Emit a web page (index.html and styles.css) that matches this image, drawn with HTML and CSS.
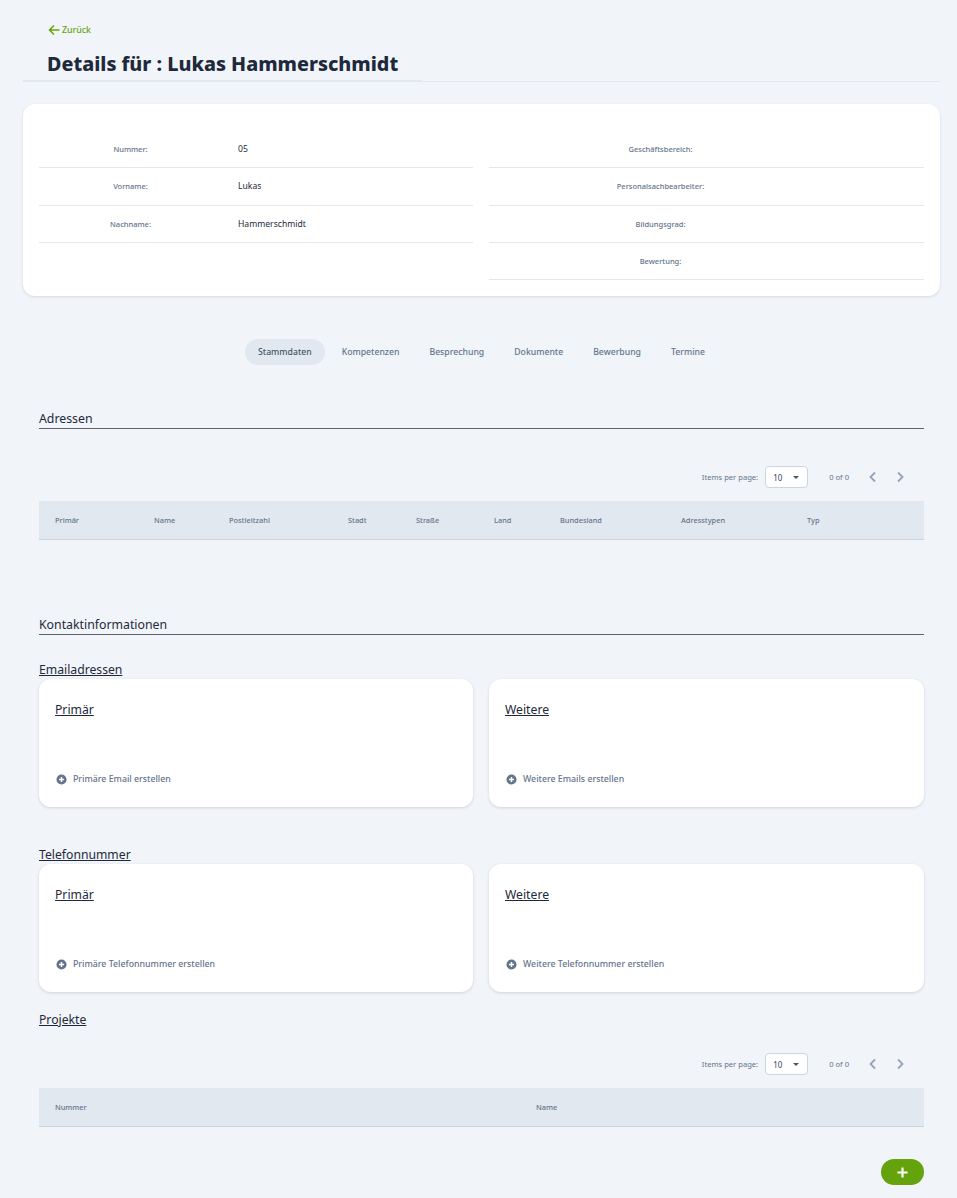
FILE: index.html
```html
<!DOCTYPE html>
<html lang="de">
<head>
<meta charset="utf-8">
<title>Details für : Lukas Hammerschmidt</title>
<link rel="stylesheet" href="styles.css">
</head>
<body>
<main class="page">
  <a class="back" href="#">
    <svg class="back-icon" viewBox="0 0 12 12" aria-hidden="true"><path d="M11.5 6H1.5M6 1.5L1.5 6L6 10.5"/></svg>
    <span>Zurück</span>
  </a>
  <header class="title-bar"><h1>Details für : Lukas Hammerschmidt</h1></header>

  <section class="summary">
    <div class="summary-col">
      <div class="row"><span class="lbl lbl-l">Nummer:</span><span class="val">05</span></div>
      <div class="row"><span class="lbl lbl-l">Vorname:</span><span class="val">Lukas</span></div>
      <div class="row"><span class="lbl lbl-l">Nachname:</span><span class="val">Hammerschmidt</span></div>
    </div>
    <div class="summary-col">
      <div class="row"><span class="lbl lbl-r">Geschäftsbereich:</span></div>
      <div class="row"><span class="lbl lbl-r">Personalsachbearbeiter:</span></div>
      <div class="row"><span class="lbl lbl-r">Bildungsgrad:</span></div>
      <div class="row"><span class="lbl lbl-r">Bewertung:</span></div>
    </div>
  </section>

  <nav class="tabs">
    <a class="tab active" href="#">Stammdaten</a>
    <a class="tab" href="#">Kompetenzen</a>
    <a class="tab" href="#">Besprechung</a>
    <a class="tab" href="#">Dokumente</a>
    <a class="tab" href="#">Bewerbung</a>
    <a class="tab" href="#">Termine</a>
  </nav>

  <div class="content">
    <h2 class="section-title">Adressen</h2>
    <div class="pager pager-first">
      <span class="pager-label">Items per page:</span>
      <span class="select"><span>10</span><i class="caret"></i></span>
      <span class="pager-range">0 of 0</span>
      <svg class="chev" viewBox="0 0 10 12" aria-hidden="true"><path d="M7 1.5L2.5 6L7 10.5"/></svg>
      <svg class="chev" viewBox="0 0 10 12" aria-hidden="true"><path d="M3 1.5L7.5 6L3 10.5"/></svg>
    </div>
    <div class="thead cols-address">
      <span>Primär</span><span>Name</span><span>Postleitzahl</span><span>Stadt</span><span>Straße</span><span>Land</span><span>Bundesland</span><span>Adresstypen</span><span>Typ</span>
    </div>

    <h2 class="section-title contact-title">Kontaktinformationen</h2>

    <h3 class="sub-title email-title">Emailadressen</h3>
    <div class="card-pair">
      <div class="card">
        <h4 class="card-title">Primär</h4>
        <a class="add" href="#"><svg class="add-icon" viewBox="0 0 12 12" aria-hidden="true"><circle cx="6" cy="6" r="5.5"/><path d="M6 3.3V8.7M3.3 6H8.7"/></svg><span>Primäre Email erstellen</span></a>
      </div>
      <div class="card">
        <h4 class="card-title">Weitere</h4>
        <a class="add" href="#"><svg class="add-icon" viewBox="0 0 12 12" aria-hidden="true"><circle cx="6" cy="6" r="5.5"/><path d="M6 3.3V8.7M3.3 6H8.7"/></svg><span>Weitere Emails erstellen</span></a>
      </div>
    </div>

    <h3 class="sub-title phone-title">Telefonnummer</h3>
    <div class="card-pair">
      <div class="card">
        <h4 class="card-title">Primär</h4>
        <a class="add" href="#"><svg class="add-icon" viewBox="0 0 12 12" aria-hidden="true"><circle cx="6" cy="6" r="5.5"/><path d="M6 3.3V8.7M3.3 6H8.7"/></svg><span>Primäre Telefonnummer erstellen</span></a>
      </div>
      <div class="card">
        <h4 class="card-title">Weitere</h4>
        <a class="add" href="#"><svg class="add-icon" viewBox="0 0 12 12" aria-hidden="true"><circle cx="6" cy="6" r="5.5"/><path d="M6 3.3V8.7M3.3 6H8.7"/></svg><span>Weitere Telefonnummer erstellen</span></a>
      </div>
    </div>

    <h3 class="sub-title project-title">Projekte</h3>
    <div class="pager pager-second">
      <span class="pager-label">Items per page:</span>
      <span class="select"><span>10</span><i class="caret"></i></span>
      <span class="pager-range">0 of 0</span>
      <svg class="chev" viewBox="0 0 10 12" aria-hidden="true"><path d="M7 1.5L2.5 6L7 10.5"/></svg>
      <svg class="chev" viewBox="0 0 10 12" aria-hidden="true"><path d="M3 1.5L7.5 6L3 10.5"/></svg>
    </div>
    <div class="thead cols-project"><span>Nummer</span><span>Name</span></div>
  </div>

  <div class="fab-row">
    <button class="fab" type="button" aria-label="Hinzufügen"><svg viewBox="0 0 12 12" aria-hidden="true"><path d="M6 0.5V11.5M0.5 6H11.5"/></svg></button>
  </div>
</main>
</body>
</html>
```
FILE: styles.css
```css
* { box-sizing: border-box; }
html, body { height: 100%; }
body {
  margin: 0;
  background: #f1f5f9;
  font-family: "Noto Sans", "Open Sans", sans-serif;
  color: #1e293b;
  overflow: hidden;
}
a { text-decoration: none; color: inherit; }
h1, h2, h3, h4 { margin: 0; font-weight: 400; }

.page { width: 940px; margin-left: 0; padding: 0 0 0 23px; }

.back {
  display: flex;
  align-items: center;
  gap: 2px;
  margin-left: 25px;
  padding-top: 23px;
  height: 37px;
  color: #65a30d;
  font-size: 8.8px;
  font-weight: 500;
}
.back-icon { width: 12px; height: 12px; fill: none; stroke: #65a30d; stroke-width: 1.5; }

.title-bar {
  height: 45px;
  padding-left: 24px;
  border-bottom: 1px solid #e2e8f0;
  position: relative;
}
.title-bar::after {
  content: "";
  position: absolute;
  left: 0;
  bottom: -1px;
  width: 399px;
  height: 2px;
  background: #e2e8f0;
}
.title-bar h1 {
  font-size: 19.7px;
  line-height: 28px;
  font-weight: 800;
  padding-top: 13px;
}

.summary {
  margin-top: 22px;
  height: 192px;
  padding: 27px 16px 0;
  background: #fff;
  border-radius: 12px;
  box-shadow: 0 1px 3px rgba(15, 23, 42, 0.12);
  display: grid;
  grid-template-columns: 434px 435px;
  gap: 16px;
}
.row {
  height: 37.33px;
  display: flex;
  align-items: center;
  border-bottom: 1px solid #e2e8f0;
}
.lbl {
  text-align: center;
  font-size: 7.5px;
  font-weight: 500;
  color: #64748b;
  flex: none;
}
.lbl-l { width: 183px; }
.lbl-r { width: 343px; }
.val { margin-left: 16px; font-size: 8.6px; color: #1e293b; }

.tabs {
  margin-top: 43px;
  display: flex;
  justify-content: center;
  gap: 4px;
}
.tab {
  height: 26px;
  line-height: 26px;
  padding: 0 13px;
  border-radius: 13px;
  font-size: 8.7px;
  font-weight: 500;
  color: #64748b;
}
.tab.active { background: #e2e8f0; color: #475569; }

.content { padding: 0 16px; }
.section-title {
  font-size: 12.3px;
  line-height: 20px;
  border-bottom: 1px solid #5f6368;
  height: 20px;
}
.content > .section-title:first-child { margin-top: 44px; }
.pager {
  display: flex;
  align-items: center;
  justify-content: flex-end;
  height: 22px;
  color: #64748b;
  font-size: 7.6px;
}
.pager-first { margin-top: 37px; }
.pager-second { margin-top: 26px; }
.pager-label { margin-right: 7px; }
.select {
  width: 43px;
  height: 22px;
  display: flex;
  align-items: center;
  justify-content: space-between;
  padding: 0 7px 0 7px;
  background: #fff;
  border: 1px solid #cbd5e1;
  border-radius: 4px;
  color: #334155;
  font-size: 8px;
  margin-right: 21px;
}
.caret {
  width: 0;
  height: 0;
  border-left: 3px solid transparent;
  border-right: 3px solid transparent;
  border-top: 3px solid #475569;
  margin-right: 1px;
}
.pager-range { margin-right: 19px; }
.chev { width: 10px; height: 12px; fill: none; stroke: #94a3b8; stroke-width: 1.8; margin-right: 17px; }
.chev:last-child { margin-right: 19px; }

.thead {
  margin-top: 13px;
  height: 39px;
  padding-left: 16px;
  display: grid;
  align-items: center;
  background: #e2e8f0;
  border-bottom: 1px solid #cbd5e1;
  font-size: 7.4px;
  font-weight: 500;
  color: #64748b;
}
.cols-address { grid-template-columns: 99px 75px 119px 68px 78px 66px 121px 126px 1fr; }
.cols-project { grid-template-columns: 481px 1fr; }

.contact-title { margin-top: 75px; }
.sub-title {
  font-size: 12.2px;
  line-height: 15px;
  margin-bottom: 2px;
  text-decoration: underline;
}
.email-title { margin-top: 27px; }
.phone-title { margin-top: 40px; }
.project-title { margin-top: 20px; }

.card-pair {
  display: grid;
  grid-template-columns: 434px 435px;
  gap: 16px;
}
.card {
  height: 128px;
  padding: 23px 16px 0;
  background: #fff;
  border-radius: 12px;
  box-shadow: 0 1px 3px rgba(15, 23, 42, 0.15);
  display: flex;
  flex-direction: column;
}
.card-title {
  font-size: 12.2px;
  line-height: 15px;
  text-decoration: underline;
}
.add {
  margin-top: 56px;
  display: flex;
  align-items: center;
  gap: 6px;
  font-size: 8.8px;
  font-weight: 500;
  color: #64748b;
}
.add-icon { width: 11px; height: 11px; margin-left: 1px; }
.add-icon circle { fill: #64748b; }
.add-icon path { stroke: #fff; stroke-width: 1.6; fill: none; }

.fab-row { display: flex; justify-content: flex-end; padding-right: 16px; margin-top: 32px; }
.fab {
  width: 43px;
  height: 26px;
  padding: 0;
  border: 0;
  border-radius: 13px;
  background: #65a30d;
  display: flex;
  align-items: center;
  justify-content: center;
}
.fab svg { width: 11px; height: 11px; fill: none; stroke: #fff; stroke-width: 2.3; }
```
